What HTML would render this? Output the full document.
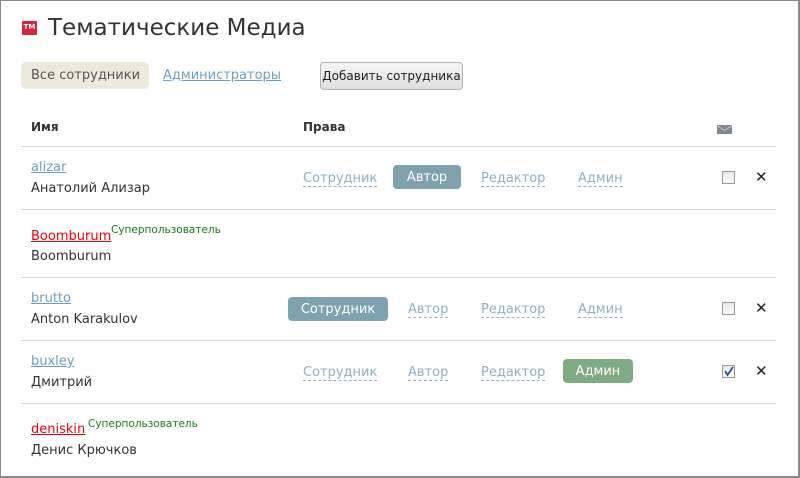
<!DOCTYPE html>
<html><head><meta charset="utf-8"><style>
*{margin:0;padding:0;box-sizing:border-box}
body{width:800px;height:478px;background:#fff;font-family:"DejaVu Sans","Liberation Sans",sans-serif;font-size:13px;color:#333;position:relative;overflow:hidden}
.frame{position:absolute;left:0;top:0;width:800px;height:478px;border:1px solid #8a8a8a;border-bottom-width:2px;border-right-width:2px}
.a{position:absolute;white-space:nowrap}
.logo{left:22px;top:21px;width:15px;height:14px;background:#d8243d;color:#fff;font-size:7px;font-weight:bold;line-height:13px;text-align:center;border-radius:1px}
.title{left:48px;top:15px;font-size:23px;color:#333}
.tab{left:21px;top:62px;width:128px;height:27px;background:#eeeadb;border-radius:5px;line-height:27px;padding-left:10px;color:#555}
.lnk{color:#6b9fc2;text-decoration:underline}
.btn{left:320px;top:62px;width:143px;height:28px;border:1px solid #b4b4b4;border-radius:4px;background:linear-gradient(#f6f6f6,#dedede);font-size:12px;line-height:26px;text-align:center;color:#222}
.th{font-weight:bold;font-size:12px;color:#333;top:120px}
.sep{left:21px;width:755px;height:1px;background:#d8d8d8}
.dl{color:#8fb0c6;border-bottom:1px dashed #8fb0c6;line-height:15px}
.pill{height:24px;border-radius:4px;color:#fff;line-height:24px;padding-top:1px;text-align:center}
.cb{width:13px;height:13px;border:1px solid #999;background:linear-gradient(#e8e8e8,#fafafa)}
.x{font-size:15px;color:#222}
.red{color:#f0000c;text-decoration:underline}
.sup{font-size:10.5px;color:#1a7a1a}
</style></head><body>
<div class="frame"></div>
<div class="a logo">TM</div>
<div class="a title">Тематические Медиа</div>
<div class="a tab">Все сотрудники</div>
<div class="a lnk" style="left:163px;top:68px">Администраторы</div>
<div class="a btn">Добавить сотрудника</div>
<div class="a th" style="left:31px">Имя</div>
<div class="a th" style="left:303px">Права</div>
<svg class="a" style="left:717px;top:125px" width="15" height="9"><rect width="15" height="9" fill="#7f8794"/><path d="M0 0.5 L7.5 5.5 L15 0.5" stroke="#c9cdd4" fill="none"/></svg>
<div class="a sep" style="top:146px"></div>

<div class="a lnk" style="left:31px;top:160px">alizar</div>
<div class="a" style="left:31px;top:181px">Анатолий Ализар</div>
<div class="a dl" style="left:303px;top:171px">Сотрудник</div>
<div class="a pill" style="left:393px;top:165px;width:68px;background:#7fa2b0">Автор</div>
<div class="a dl" style="left:481px;top:171px">Редактор</div>
<div class="a dl" style="left:578px;top:171px">Админ</div>
<div class="a cb" style="left:722px;top:171px"></div>
<div class="a x" style="left:755px;top:168px">✕</div>
<div class="a sep" style="top:209px"></div>

<div class="a red" style="left:31px;top:229px">Boomburum</div>
<div class="a sup" style="left:111px;top:224px">Суперпользователь</div>
<div class="a" style="left:31px;top:249px">Boomburum</div>
<div class="a sep" style="top:277px"></div>

<div class="a lnk" style="left:31px;top:291px">brutto</div>
<div class="a" style="left:31px;top:312px">Anton Karakulov</div>
<div class="a pill" style="left:288px;top:297px;width:100px;background:#7fa2b0">Сотрудник</div>
<div class="a dl" style="left:408px;top:302px">Автор</div>
<div class="a dl" style="left:481px;top:302px">Редактор</div>
<div class="a dl" style="left:578px;top:302px">Админ</div>
<div class="a cb" style="left:722px;top:302px"></div>
<div class="a x" style="left:755px;top:299px">✕</div>
<div class="a sep" style="top:340px"></div>

<div class="a lnk" style="left:31px;top:354px">buxley</div>
<div class="a" style="left:31px;top:375px">Дмитрий</div>
<div class="a dl" style="left:303px;top:365px">Сотрудник</div>
<div class="a dl" style="left:408px;top:365px">Автор</div>
<div class="a dl" style="left:481px;top:365px">Редактор</div>
<div class="a pill" style="left:563px;top:359px;width:70px;background:#7fab82">Админ</div>
<div class="a cb" style="left:722px;top:365px"></div>
<svg class="a" style="left:723px;top:366px" width="11" height="11"><path d="M2 5 L4.5 9 L10 1" stroke="#2a4fa8" stroke-width="1.8" fill="none"/></svg>
<div class="a x" style="left:755px;top:362px">✕</div>
<div class="a sep" style="top:403px"></div>

<div class="a red" style="left:31px;top:422px">deniskin</div>
<div class="a sup" style="left:88px;top:418px">Суперпользователь</div>
<div class="a" style="left:31px;top:443px">Денис Крючков</div>
</body></html>
